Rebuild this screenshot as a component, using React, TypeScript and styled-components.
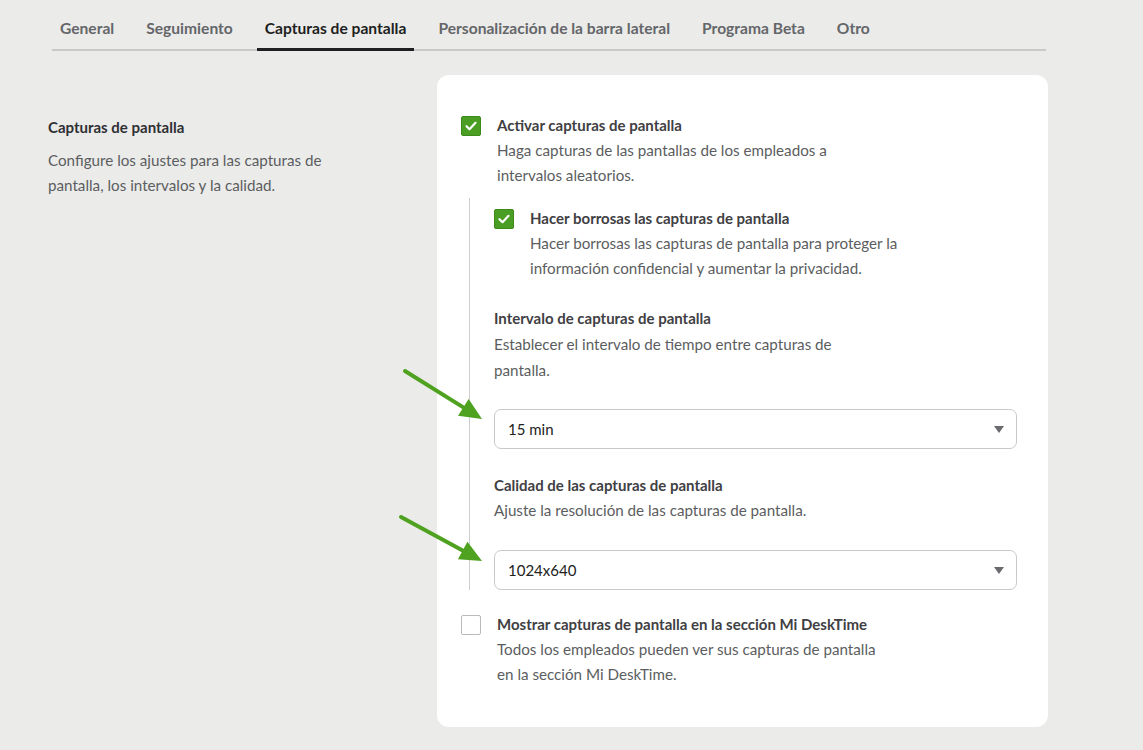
import React from 'react';
import styled, { createGlobalStyle } from 'styled-components';

const GlobalStyle = createGlobalStyle`
  body {
    margin: 0;
    background: #ebebea;
    font-family: Lato, "Liberation Sans", sans-serif;
  }
`;

const Page = styled.div`
  position: relative;
  width: 1143px;
  height: 750px;
  overflow: hidden;
  box-sizing: border-box;
  padding-left: 48px;
`;

const TabList = styled.div`
  display: flex;
  gap: 16px;
  margin-left: 4px;
  width: 994px;
  border-bottom: 2px solid #c9c9c9;
`;

const Tab = styled.div<{ $active?: boolean }>`
  position: relative;
  padding: 18px 8px 11px;
  font-size: 15.6px;
  line-height: 20px;
  font-weight: 700;
  color: ${(p) => (p.$active ? '#1e1f21' : '#646669')};
  &::after {
    content: '';
    display: ${(p) => (p.$active ? 'block' : 'none')};
    position: absolute;
    left: 0;
    right: 0;
    bottom: -2px;
    height: 3px;
    background: #1e1f21;
  }
`;

const Content = styled.div`
  display: grid;
  grid-template-columns: 389px 611px;
  margin-top: 24px;
`;

const Intro = styled.div`
  padding-top: 40px;
`;

const IntroTitle = styled.div`
  font-size: 15px;
  line-height: 25px;
  font-weight: 700;
  color: #2f3033;
  margin-bottom: 8px;
`;

const Desc = styled.div<{ $lh?: number }>`
  font-size: 15.2px;
  line-height: ${(p) => p.$lh ?? 25}px;
  color: #5b5d60;
`;

const Card = styled.div`
  background: #fff;
  border-radius: 12px;
  padding: 38px 31px 40px 24px;
`;

const CheckRow = styled.div`
  display: flex;
  gap: 16px;
  align-items: flex-start;
`;

const Box = styled.div<{ $checked?: boolean }>`
  flex: none;
  width: 20px;
  height: 20px;
  margin-top: 3px;
  box-sizing: border-box;
  border-radius: 2px;
  display: flex;
  align-items: center;
  justify-content: center;
  background: ${(p) => (p.$checked ? '#4a9e23' : '#fff')};
  border: 1px solid ${(p) => (p.$checked ? '#3b8a1a' : '#b9babc')};
`;

const Label = styled.div`
  font-size: 15px;
  line-height: 25px;
  font-weight: 700;
  color: #3f4043;
`;

const Nested = styled.div`
  margin: 10px 0 0 8px;
  padding: 8px 0 0 24px;
  border-left: 1px solid #cfcfcf;
`;

const Field = styled.div<{ $top: number }>`
  margin-top: ${(p) => p.$top}px;
`;

const SelectBox = styled.div<{ $top: number }>`
  margin-top: ${(p) => p.$top}px;
  height: 40px;
  box-sizing: border-box;
  border: 1px solid #c8c9cb;
  border-radius: 7px;
  display: flex;
  align-items: center;
  justify-content: space-between;
  padding: 0 12px 0 13px;
  font-size: 15px;
  color: #222;
`;

const Caret = styled.span`
  width: 0;
  height: 0;
  border-left: 5px solid transparent;
  border-right: 5px solid transparent;
  border-top: 7px solid #6a6b6e;
`;

const LastRow = styled.div`
  margin-top: 22px;
`;

const Arrows = styled.svg`
  position: absolute;
  left: 0;
  top: 0;
  pointer-events: none;
`;

const Check = () => (
  <svg width="14" height="14" viewBox="0 0 14 14">
    <path d="M2.5 7.2l3 3 6-6.4" fill="none" stroke="#fff" strokeWidth="2.2" strokeLinecap="round" strokeLinejoin="round" />
  </svg>
);

const Option: React.FC<{ checked?: boolean; label: string; lines: string[] }> = ({ checked, label, lines }) => (
  <CheckRow>
    <Box $checked={checked}>{checked && <Check />}</Box>
    <div>
      <Label>{label}</Label>
      <Desc>
        {lines.map((l, i) => (
          <div key={i}>{l}</div>
        ))}
      </Desc>
    </div>
  </CheckRow>
);

const Arrow: React.FC<{ x1: number; y1: number; x2: number; y2: number }> = ({ x1, y1, x2, y2 }) => {
  const a = Math.atan2(y2 - y1, x2 - x1);
  const len = 22;
  const w = 10;
  const bx = x2 - len * Math.cos(a);
  const by = y2 - len * Math.sin(a);
  const px = -Math.sin(a) * w;
  const py = Math.cos(a) * w;
  return (
    <g>
      <line x1={x1} y1={y1} x2={bx} y2={by} stroke="#4ea21f" strokeWidth="4" strokeLinecap="round" />
      <polygon points={`${x2},${y2} ${bx + px},${by + py} ${bx - px},${by - py}`} fill="#4ea21f" />
    </g>
  );
};

export default function App() {
  const tabs = ['General', 'Seguimiento', 'Capturas de pantalla', 'Personalización de la barra lateral', 'Programa Beta', 'Otro'];
  return (
    <>
      <GlobalStyle />
      <Page>
        <TabList>
          {tabs.map((t) => (
            <Tab key={t} $active={t === 'Capturas de pantalla'}>
              {t}
            </Tab>
          ))}
        </TabList>
        <Content>
          <Intro>
            <IntroTitle>Capturas de pantalla</IntroTitle>
            <Desc>
              Configure los ajustes para las capturas de
              <br />
              pantalla, los intervalos y la calidad.
            </Desc>
          </Intro>
          <Card>
            <Option
              checked
              label="Activar capturas de pantalla"
              lines={['Haga capturas de las pantallas de los empleados a', 'intervalos aleatorios.']}
            />
            <Nested>
              <Option
                checked
                label="Hacer borrosas las capturas de pantalla"
                lines={[
                  'Hacer borrosas las capturas de pantalla para proteger la',
                  'información confidencial y aumentar la privacidad.',
                ]}
              />
              <Field $top={25}>
                <Label>Intervalo de capturas de pantalla</Label>
                <Desc $lh={26}>
                  Establecer el intervalo de tiempo entre capturas de
                  <br />
                  pantalla.
                </Desc>
                <SelectBox $top={26}>
                  <span>15 min</span>
                  <Caret />
                </SelectBox>
              </Field>
              <Field $top={24}>
                <Label>Calidad de las capturas de pantalla</Label>
                <Desc>Ajuste la resolución de las capturas de pantalla.</Desc>
                <SelectBox $top={27}>
                  <span>1024x640</span>
                  <Caret />
                </SelectBox>
              </Field>
            </Nested>
            <LastRow>
              <Option
                label="Mostrar capturas de pantalla en la sección Mi DeskTime"
                lines={['Todos los empleados pueden ver sus capturas de pantalla', 'en la sección Mi DeskTime.']}
              />
            </LastRow>
          </Card>
        </Content>
        <Arrows width="1143" height="750">
          <Arrow x1={405} y1={371} x2={482} y2={419} />
          <Arrow x1={401} y1={517} x2={482} y2={561} />
        </Arrows>
      </Page>
    </>
  );
}
